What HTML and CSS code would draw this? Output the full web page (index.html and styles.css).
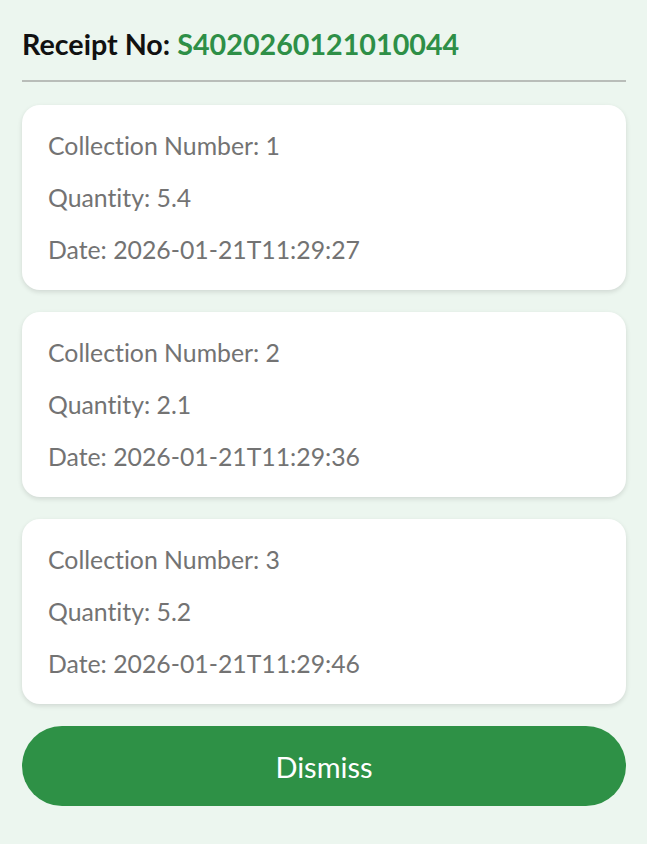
FILE: index.html
```html
<!DOCTYPE html>
<html>
<head>
    <title>Receipt</title>
    <link rel="stylesheet" href="styles.css">
</head>
<body>
    <div class="dialog">
        <div class="receipt-header">
            <span class="receipt-label">Receipt No:</span>
            <span class="receipt-number">S4020260121010044</span>
        </div>
        <hr class="divider">

        <!-- Collections -->
        <div class="collection-list">
            <div class="collection-card">
                <div class="collection-line">Collection Number: 1</div>
                <div class="collection-line">Quantity: 5.4</div>
                <div class="collection-line">Date: 2026-01-21T11:29:27</div>
            </div>
            <div class="collection-card">
                <div class="collection-line">Collection Number: 2</div>
                <div class="collection-line">Quantity: 2.1</div>
                <div class="collection-line">Date: 2026-01-21T11:29:36</div>
            </div>
            <div class="collection-card">
                <div class="collection-line">Collection Number: 3</div>
                <div class="collection-line">Quantity: 5.2</div>
                <div class="collection-line">Date: 2026-01-21T11:29:46</div>
            </div>
        </div>

        <button class="dismiss-button">Dismiss</button>
    </div>
</body>
</html>
```

FILE: styles.css
```css
/* Styling */
html, body {
    margin: 0;
    height: 100%;
}
body {
    font-family: 'Lato', 'Liberation Sans', sans-serif;
    font-variant-ligatures: none;
    background-color: #ecf6ef;
}
.dialog {
    padding: 22px 21px 22px 22px;
}
.receipt-header {
    font-size: 28.7px;
    font-weight: bold;
    line-height: 44px;
    color: #111;
}
.receipt-number {
    color: #2e8f47;
}
.divider {
    border: none;
    height: 2px;
    background-color: #b9bdb9;
    margin: 14px 0 23px 0;
}
.collection-list {
    display: flex;
    flex-direction: column;
    gap: 22px;
}
.collection-card {
    background-color: #fff;
    border-radius: 18px;
    padding: 15px 26px 14px 26px;
    box-shadow: 0 2px 5px rgba(0, 0, 0, 0.12);
}
.collection-line {
    font-size: 24.8px;
    line-height: 52px;
    color: #737373;
}
.dismiss-button {
    display: block;
    width: 100%;
    height: 80px;
    margin-top: 22px;
    background-color: #2e9146;
    color: #fff;
    font-family: inherit;
    font-size: 29px;
    border: none;
    border-radius: 40px;
    cursor: pointer;
}
```
